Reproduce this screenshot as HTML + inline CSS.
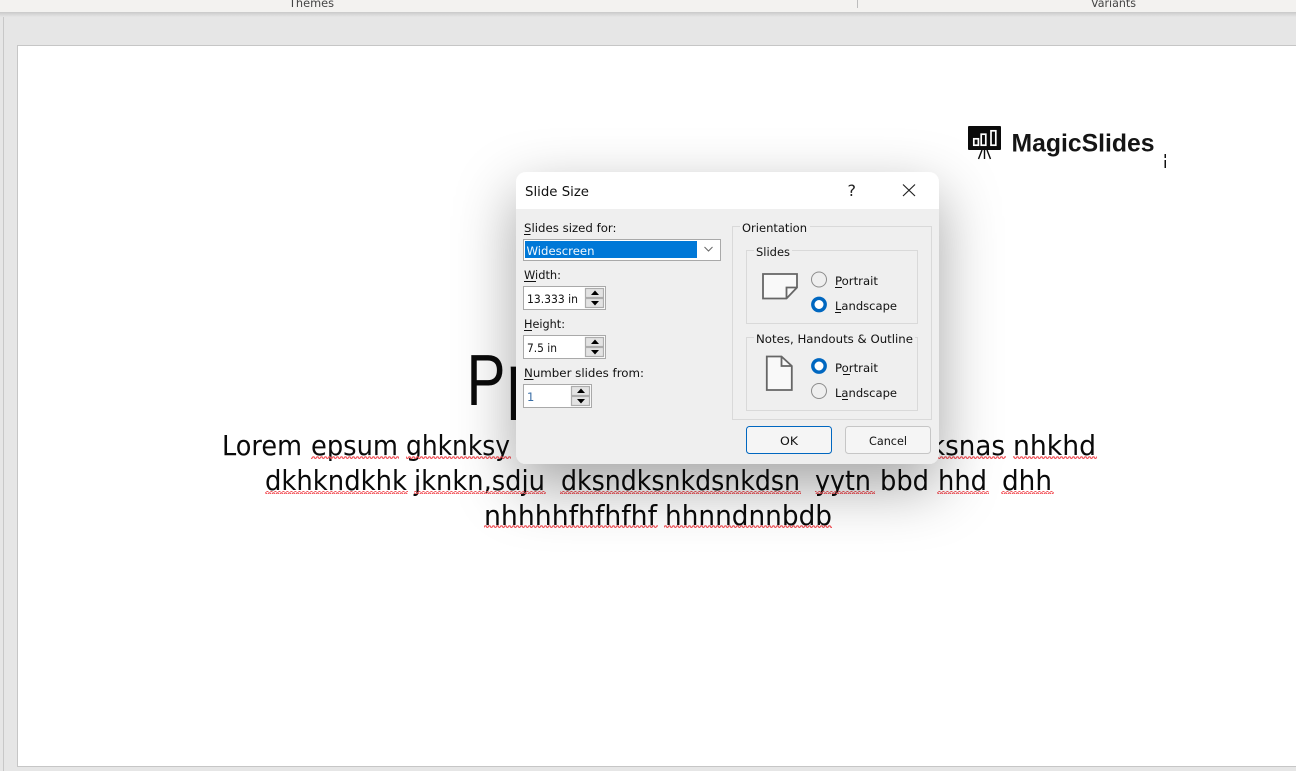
<!DOCTYPE html>
<html><head><meta charset="utf-8"><title>Slide Size</title>
<style>
html,body{margin:0;padding:0;width:1296px;height:771px;overflow:hidden;background:#e6e6e6}
svg{display:block;position:absolute;left:0;top:0}
text{font-family:"DejaVu Sans","Liberation Sans",sans-serif;white-space:pre}
.s{font-size:27.5px;fill:#0a0a0a}
.d{font-size:11.5px;fill:#111}
.btn{font-size:11.5px;fill:#111;text-anchor:middle}
</style></head>
<body>
<svg width="1296" height="771" viewBox="0 0 1296 771" xmlns="http://www.w3.org/2000/svg">
<defs>
<pattern id="w" width="4" height="3" patternUnits="userSpaceOnUse">
<path d="M0 2.4L1 .8L2 .8L3 2.4L4 2.4" fill="none" stroke="#f2555b" stroke-width="1.2"/>
</pattern>
<linearGradient id="tb" x1="0" y1="0" x2="0" y2="1"><stop offset="0" stop-color="#c9c9c9"/><stop offset="1" stop-color="#e6e6e6"/></linearGradient>
<filter id="sh" x="-40%" y="-50%" width="180%" height="230%"><feDropShadow dx="0" dy="22" stdDeviation="30" flood-color="#000" flood-opacity=".36"/></filter>
</defs>

<!-- app background -->
<rect width="1296" height="771" fill="#e6e6e6"/>
<rect x="3" y="15" width="1" height="756" fill="#c8c8c8"/>
<rect x="17.5" y="45.5" width="1290" height="721" fill="#fff" stroke="#c6c6c6"/>

<!-- ribbon -->
<rect width="1296" height="12" fill="#f3f2f0"/>
<rect y="12" width="1296" height="5" fill="url(#tb)"/>
<text x="289" y="7" font-size="11.5" fill="#444" textLength="45" lengthAdjust="spacingAndGlyphs">Themes</text>
<text x="1091" y="7" font-size="11.5" fill="#444" textLength="45" lengthAdjust="spacingAndGlyphs">Variants</text>
<rect x="857" y="0" width="1" height="8" fill="#bdbdbd"/>

<!-- logo -->
<rect x="968" y="126" width="33" height="24" rx="1" fill="#0b0b0b"/>
<g fill="none" stroke="#fff" stroke-width="1.7">
<rect x="973.8" y="138.8" width="4.6" height="6.4"/>
<rect x="981.2" y="134.2" width="4.6" height="11"/>
<rect x="991" y="130.8" width="4.8" height="14.4"/>
</g>
<path d="M982 150L978.5 159M984.5 150V159M987 150L990.5 159" stroke="#0b0b0b" stroke-width="1.4" fill="none"/>
<text x="1011.5" y="151.5" font-size="25" font-weight="700" fill="#151515" style="font-family:'Liberation Sans',sans-serif" textLength="143" lengthAdjust="spacingAndGlyphs">MagicSlides</text>
<path d="M1164.5 154h1.5v4h-1.5zM1164.5 160h1.5v8h-1.5z" fill="#111"/>

<!-- slide title -->
<text x="466.500" y="405" font-size="72" fill="#0a0a0a" style="font-family:'Liberation Sans',sans-serif" textLength="39" lengthAdjust="spacingAndGlyphs">P</text>
<text x="506" y="405" font-size="72" fill="#0a0a0a" style="font-family:'Liberation Sans',sans-serif">p</text>

<!-- slide body line 1 -->
<text class="s" x="222" y="455" textLength="80" lengthAdjust="spacingAndGlyphs">Lorem</text>
<text class="s" x="311" y="455" textLength="87" lengthAdjust="spacingAndGlyphs">epsum</text>
<text class="s" x="406" y="455" textLength="104" lengthAdjust="spacingAndGlyphs">ghknksy</text>
<text class="s" x="930" y="455" textLength="75" lengthAdjust="spacingAndGlyphs">ksnas</text>
<text class="s" x="1013" y="455" textLength="83" lengthAdjust="spacingAndGlyphs">nhkhd</text>
<!-- line 2 -->
<text class="s" x="265" y="490" textLength="142" lengthAdjust="spacingAndGlyphs">dkhkndkhk</text>
<text class="s" x="414" y="490" textLength="131" lengthAdjust="spacingAndGlyphs">jknkn,sdju</text>
<text class="s" x="561" y="490" textLength="239" lengthAdjust="spacingAndGlyphs">dksndksnkdsnkdsn</text>
<text class="s" x="815" y="490" textLength="56" lengthAdjust="spacingAndGlyphs">yytn</text>
<text class="s" x="880" y="490" textLength="49" lengthAdjust="spacingAndGlyphs">bbd</text>
<text class="s" x="938" y="490" textLength="49" lengthAdjust="spacingAndGlyphs">hhd</text>
<text class="s" x="1002" y="490" textLength="50" lengthAdjust="spacingAndGlyphs">dhh</text>
<!-- line 3 -->
<text class="s" x="484" y="525" textLength="173" lengthAdjust="spacingAndGlyphs">nhhhhfhfhfhf</text>
<text class="s" x="665" y="525" textLength="167" lengthAdjust="spacingAndGlyphs">hhnndnnbdb</text>

<!-- spell-check squiggles -->
<g fill="url(#w)">
<rect x="311" y="456" width="88" height="3"/>
<rect x="406" y="456" width="105" height="3"/>
<rect x="938" y="456" width="68" height="3"/>
<rect x="1013" y="456" width="84" height="3"/>
<rect x="265" y="491" width="143" height="3"/>
<rect x="414" y="491" width="132" height="3"/>
<rect x="560" y="491" width="241" height="3"/>
<rect x="815" y="491" width="60" height="3"/>
<rect x="937" y="491" width="52" height="3"/>
<rect x="1001" y="491" width="53" height="3"/>
<rect x="484" y="525" width="174" height="3"/>
<rect x="664" y="525" width="168" height="3"/>
</g>

<!-- dialog -->
<rect x="516" y="172" width="423" height="292" rx="10" fill="#efefef" filter="url(#sh)"/>
<path d="M516 209V182a10 10 0 0 1 10-10H929a10 10 0 0 1 10 10V209Z" fill="#fff"/>
<text x="525" y="196" font-size="13.500" fill="#111" textLength="64" lengthAdjust="spacingAndGlyphs">Slide Size</text>
<text x="847.500" y="196" font-size="16" fill="#222">?</text>
<path d="M903 184.500L915 196M915 184.500L903 196" stroke="#222" stroke-width="1.200" fill="none"/>

<!-- left column -->
<text class="d" x="524" y="232" textLength="92.500" lengthAdjust="spacingAndGlyphs">Slides sized for:</text>
<rect x="524" y="234" width="6.500" height="1" fill="#111"/>
<rect x="523.500" y="239.500" width="197" height="21" fill="#fff" stroke="#a9a9a9"/>
<rect x="525" y="241" width="172" height="17" fill="#0078d7"/>
<text x="526.500" y="255" font-size="11.5" fill="#f2f8fd" textLength="68" lengthAdjust="spacingAndGlyphs">Widescreen</text>
<path d="M704.500 247L708.500 251L712.500 247" fill="none" stroke="#666" stroke-width="1"/>

<text class="d" x="524" y="279" textLength="37" lengthAdjust="spacingAndGlyphs">Width:</text>
<rect x="524" y="281" width="12" height="1" fill="#111"/>
<rect x="523.500" y="286.500" width="82" height="23" fill="#fff" stroke="#a9a9a9"/>
<text class="d" x="527" y="303" textLength="51" lengthAdjust="spacingAndGlyphs">13.333 in</text>
<g fill="#e3e3e3" stroke="#adadad" stroke-width="1.200">
<rect x="585.500" y="288.500" width="18" height="9"/><rect x="585.500" y="298.500" width="18" height="9"/>
</g>
<path d="M591 295L595 290.500L599 295ZM591 301L599 301L595 305.500Z" fill="#000"/>

<text class="d" x="524" y="328" textLength="41" lengthAdjust="spacingAndGlyphs">Height:</text>
<rect x="524" y="330" width="8" height="1" fill="#111"/>
<rect x="523.500" y="335.500" width="82" height="23" fill="#fff" stroke="#a9a9a9"/>
<text class="d" x="527" y="352" textLength="30" lengthAdjust="spacingAndGlyphs">7.5 in</text>
<g fill="#e3e3e3" stroke="#adadad" stroke-width="1.200">
<rect x="585.500" y="337.500" width="18" height="9"/><rect x="585.500" y="347.500" width="18" height="9"/>
</g>
<path d="M591 344L595 339.500L599 344ZM591 350L599 350L595 354.500Z" fill="#000"/>

<text class="d" x="524" y="377" textLength="120" lengthAdjust="spacingAndGlyphs">Number slides from:</text>
<rect x="524" y="379" width="9.500" height="1" fill="#111"/>
<rect x="523.500" y="384.500" width="68" height="23" fill="#fff" stroke="#a9a9a9"/>
<text x="527" y="401" font-size="11.5" fill="#3a6ea5">1</text>
<g fill="#e3e3e3" stroke="#adadad" stroke-width="1.200">
<rect x="571.500" y="386.500" width="18" height="9"/><rect x="571.500" y="396.500" width="18" height="9"/>
</g>
<path d="M577 393L581 388.500L585 393ZM577 399L585 399L581 403.500Z" fill="#000"/>

<!-- orientation group -->
<rect x="732.500" y="226.500" width="199" height="193" fill="none" stroke="#d9d9d9"/>
<rect x="740" y="222" width="70" height="10" fill="#efefef"/>
<text class="d" x="742" y="232" textLength="65" lengthAdjust="spacingAndGlyphs">Orientation</text>

<rect x="746.500" y="250.500" width="171" height="73" fill="none" stroke="#d9d9d9"/>
<rect x="754" y="246" width="38" height="10" fill="#efefef"/>
<text class="d" x="756" y="256" textLength="34" lengthAdjust="spacingAndGlyphs">Slides</text>
<path d="M763 274H797V287.500L786.500 298.500H763Z" fill="#f9f9f9" stroke="#666" stroke-width="1.800"/>
<path d="M797 287.500H786.500V298.500" fill="none" stroke="#666" stroke-width="1.800"/>
<circle cx="819" cy="279.500" r="7.500" fill="#efefef" stroke="#8c8c8c" stroke-width="1"/>
<text class="d" x="835" y="285" textLength="43" lengthAdjust="spacingAndGlyphs">Portrait</text>
<rect x="835" y="287" width="7" height="1" fill="#111"/>
<circle cx="819" cy="304.500" r="6.200" fill="#fff" stroke="#0067c0" stroke-width="3.400"/>
<text class="d" x="835" y="310" textLength="62" lengthAdjust="spacingAndGlyphs">Landscape</text>
<rect x="835" y="312" width="6" height="1" fill="#111"/>

<rect x="746.500" y="337.500" width="171" height="73" fill="none" stroke="#d9d9d9"/>
<rect x="754" y="333" width="161" height="10" fill="#efefef"/>
<text class="d" x="756" y="343" textLength="157" lengthAdjust="spacingAndGlyphs">Notes, Handouts &amp; Outline</text>
<path d="M766.800 356.500H781.500L791.800 366V390H766.800Z" fill="#f9f9f9" stroke="#666" stroke-width="1.800"/>
<path d="M781.500 356.500V366H791.800" fill="none" stroke="#666" stroke-width="1.800"/>
<circle cx="819" cy="366" r="6.200" fill="#fff" stroke="#0067c0" stroke-width="3.400"/>
<text class="d" x="835" y="372" textLength="43" lengthAdjust="spacingAndGlyphs">Portrait</text>
<rect x="843" y="374" width="7" height="1" fill="#111"/>
<circle cx="819" cy="391" r="7.500" fill="#efefef" stroke="#8c8c8c" stroke-width="1"/>
<text class="d" x="835" y="397" textLength="62" lengthAdjust="spacingAndGlyphs">Landscape</text>
<rect x="842" y="399" width="6" height="1" fill="#111"/>

<!-- buttons -->
<rect x="746.500" y="426.500" width="85" height="27" rx="3" fill="#f5f5f5" stroke="#0067c0"/>
<text class="btn" x="789" y="445" textLength="18" lengthAdjust="spacingAndGlyphs">OK</text>
<rect x="845.500" y="426.500" width="85" height="27" rx="3" fill="#f5f5f5" stroke="#c6c6c6"/>
<text class="btn" x="888" y="445" textLength="38" lengthAdjust="spacingAndGlyphs">Cancel</text>
</svg>
</body></html>
